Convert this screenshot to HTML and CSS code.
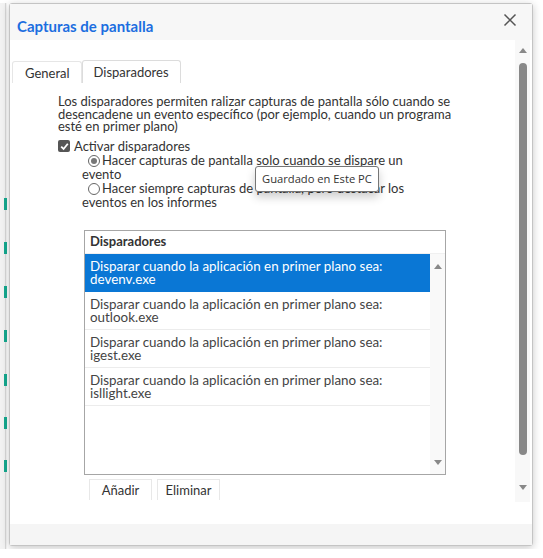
FILE: index.html
```html
<!DOCTYPE html>
<html>
<head>
    <meta charset="UTF-8">
    <title>Capturas de pantalla</title>
    <link rel="stylesheet" href="styles.css">
</head>
<body>
    <div class="desk-edge"></div>

    <div class="dialog">
        <div class="dlg-head">
            <span class="dlg-title">Capturas de pantalla</span>
            <span class="dlg-close">
                <svg width="14" height="14" viewBox="0 0 14 14">
                    <path d="M1.5 1.5 L12.5 12.5 M12.5 1.5 L1.5 12.5" stroke="#555" stroke-width="1.5" fill="none"/>
                </svg>
            </span>
        </div>

        <div class="dlg-body">
            <div class="scroll-area">
                <div class="tabs">
                    <div class="tab">General</div>
                    <div class="tab active">Disparadores</div>
                </div>

                <div class="panel">
                    <p class="intro">Los disparadores permiten ralizar capturas de pantalla sólo cuando se desencadene un evento específico (por ejemplo, cuando un programa esté en primer plano)</p>

                    <label class="check-row">
                        <span class="checkbox">
                            <svg width="9" height="9" viewBox="0 0 9 9">
                                <path d="M1.2 4.6 L3.6 7 L7.8 1.8" stroke="#fff" stroke-width="1.8" fill="none"/>
                            </svg>
                        </span>
                        Activar disparadores
                    </label>

                    <div class="radio-row"><span class="radio on"></span>Hacer capturas de pantalla solo cuando se dispare un evento</div>
                    <div class="radio-row"><span class="radio"></span>Hacer siempre capturas de pantalla, pero destacar los eventos en los informes</div>

                    <div class="listbox">
                        <div class="list-head">Disparadores</div>
                        <div class="list-main">
                            <div class="list-rows">
                                <div class="list-row selected">Disparar cuando la aplicación en primer plano sea:<br>devenv.exe</div>
                                <div class="list-row">Disparar cuando la aplicación en primer plano sea:<br>outlook.exe</div>
                                <div class="list-row">Disparar cuando la aplicación en primer plano sea:<br>igest.exe</div>
                                <div class="list-row">Disparar cuando la aplicación en primer plano sea:<br>isllight.exe</div>
                            </div>
                            <div class="list-scroll">
                                <span class="arrow up"></span>
                                <span class="arrow down"></span>
                            </div>
                        </div>
                    </div>

                    <div class="list-buttons">
                        <button class="btn">Añadir</button>
                        <button class="btn">Eliminar</button>
                    </div>
                </div>
            </div>

            <div class="vscroll">
                <span class="arrow up"></span>
                <span class="thumb"></span>
                <span class="arrow down"></span>
            </div>
        </div>

        <div class="dlg-foot"></div>

        <div class="tooltip">Guardado en Este PC</div>
    </div>
</body>
</html>
```

FILE: styles.css
```css
body {
    margin: 0;
    background: #fff;
    font-family: Lato, "Open Sans", Arial, sans-serif;
    color: #333;
    display: flex;
    align-items: flex-start;
}

/* window behind the dialog, only its edge shows */
.desk-edge {
    width: 7px;
    height: 546px;
    margin-top: 3px;
    background:
        repeating-linear-gradient(to bottom, transparent 0, transparent 195px, #14a98f 195px, #14a98f 207px, transparent 207px, transparent 239px, #14a98f 239px, #14a98f 251px, transparent 251px, transparent 283px, #14a98f 283px, #14a98f 295px, transparent 295px, transparent 327px, #14a98f 327px, #14a98f 339px, transparent 339px, transparent 371px, #14a98f 371px, #14a98f 383px, transparent 383px, transparent 414px, #14a98f 414px, #14a98f 426px, transparent 426px, transparent 457px, #14a98f 457px, #14a98f 469px, transparent 469px, transparent 546px) 4px 0 / 3px 100% no-repeat,
        linear-gradient(#d8d8d8, #d8d8d8) 5px 0 / 1px 100% no-repeat,
        #f3f3f3;
}

.dialog {
    position: relative;
    width: 524px;
    height: 543px;
    margin: 3px 0 0 2px;
    border: 1px solid #c4c4c4;
    border-radius: 3px;
    box-shadow: 0 2px 8px rgba(0, 0, 0, 0.22);
    background: #fff;
    display: flex;
    flex-direction: column;
    box-sizing: border-box;
}

.dlg-head {
    height: 36px;
    background: #f7f7f7;
    display: flex;
    align-items: center;
    justify-content: space-between;
    padding: 0 15px 0 7px;
    flex: none;
}
.dlg-title {
    font-weight: bold;
    font-size: 15px;
    color: #1c6ee0;
    margin-top: 8px;
}
.dlg-close {
    display: flex;
    margin-top: -4px;
}

.dlg-body {
    flex: 1;
    display: flex;
    min-height: 0;
}
.scroll-area {
    flex: 1;
    padding: 20px 0 0 2px;
}

.tabs {
    display: flex;
    align-items: flex-end;
    height: 23px;
}
.tab {
    font-size: 13px;
    color: #333;
    height: 22px;
    line-height: 22px;
    padding: 0 11px 0 12px;
    border: 1px solid #e6e6e6;
    border-bottom: none;
    border-radius: 3px 3px 0 0;
    box-sizing: border-box;
}
.tab.active {
    height: 23px;
    border-color: #dcdcdc;
    padding: 0 11px;
}

.panel {
    padding-left: 46px;
}
.intro {
    margin: 12px 0 0;
    width: 400px;
    font-size: 13px;
    line-height: 12.7px;
}

.check-row {
    display: flex;
    align-items: center;
    gap: 4px;
    margin-top: 6px;
    font-size: 13px;
    line-height: 14px;
}
.checkbox {
    width: 12px;
    height: 12px;
    border-radius: 2px;
    background: #555;
    display: flex;
    align-items: center;
    justify-content: center;
}

.radio-row {
    margin-left: 24px;
    width: 360px;
    text-indent: 6px;
    font-size: 13px;
    line-height: 13.5px;
    margin-top: 1px;
}
.radio {
    display: inline-block;
    width: 12px;
    height: 12px;
    border: 1px solid #666;
    border-radius: 50%;
    box-sizing: border-box;
    vertical-align: -2px;
    margin-right: 2px;
    text-indent: 0;
    position: relative;
}
.radio.on::after {
    content: "";
    position: absolute;
    left: 2px;
    top: 2px;
    width: 6px;
    height: 6px;
    border-radius: 50%;
    background: #777;
}

.listbox {
    margin: 21px 0 0 26px;
    width: 362px;
    height: 245px;
    border: 1px solid #a6a6a6;
    box-sizing: border-box;
    display: flex;
    flex-direction: column;
}
.list-head {
    height: 23px;
    line-height: 20px;
    padding-left: 5px;
    font-weight: bold;
    font-size: 13px;
    color: #333;
    border-bottom: 1px solid #f0f0f0;
    box-sizing: border-box;
}
.list-main {
    flex: 1;
    display: flex;
}
.list-rows {
    flex: 1;
}
.list-row {
    height: 38px;
    padding: 6px 5px 0;
    box-sizing: border-box;
    font-size: 13.4px;
    line-height: 13px;
    color: #444;
    border-bottom: 1px solid #ececec;
}
.list-row.selected {
    background: #0a77d5;
    color: #fff;
    border-bottom-color: #0a77d5;
}
.list-scroll {
    width: 15px;
    background: #f9f9f9;
    display: flex;
    flex-direction: column;
    justify-content: space-between;
    align-items: center;
    padding: 10px 0 9px;
}

.arrow {
    width: 0;
    height: 0;
    border-left: 4.5px solid transparent;
    border-right: 4.5px solid transparent;
}
.arrow.up {
    border-bottom: 5px solid #888;
}
.arrow.down {
    border-top: 5px solid #888;
}

.list-buttons {
    display: flex;
    gap: 5px;
    margin: 4px 0 0 31px;
}
.btn {
    font-family: inherit;
    font-size: 13px;
    color: #333;
    background: #fff;
    width: 63px;
    height: 21px;
    border: 1px solid #e8e8e8;
    border-bottom: none;
    padding: 0;
}

.vscroll {
    width: 15px;
    height: 462px;
    background: #f8f8f8;
    display: flex;
    flex-direction: column;
    align-items: center;
    padding: 8px 0 0;
    box-sizing: border-box;
    margin-right: 2px;
}
.vscroll .thumb {
    width: 8px;
    height: 392px;
    margin: 10px 0 30px;
    border-radius: 4px;
    background: #888;
}

.dlg-foot {
    height: 21px;
    background: #f5f5f5;
    flex: none;
}

.tooltip {
    position: absolute;
    left: 245px;
    top: 162px;
    padding: 5px 6px;
    font-family: "Open Sans", sans-serif;
    font-size: 11.2px;
    line-height: 14px;
    color: #333;
    background: #fff;
    border: 1px solid #767676;
    border-radius: 3px;
    box-shadow: 0 5px 10px rgba(0, 0, 0, 0.2);
}
```
